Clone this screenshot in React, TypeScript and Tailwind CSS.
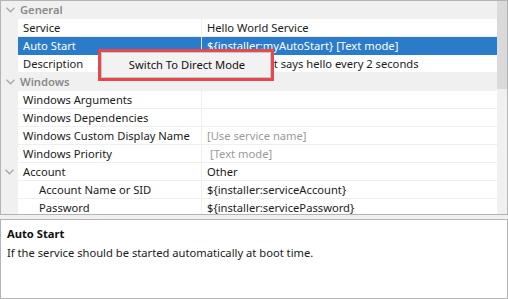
import type { ReactNode } from "react";

type Fila = {
  rotulo: string;
  valor?: string;
  nivel?: number;
  cinza?: boolean;
  recuoValor?: boolean;
  selecionada?: boolean;
  expansivel?: boolean;
};

const geral: Fila[] = [
  { rotulo: "Service", valor: "Hello World Service" },
  { rotulo: "Auto Start", valor: "${installer:myAutoStart} [Text mode]", selecionada: true },
  { rotulo: "Description", valor: "A service that says hello every 2 seconds" },
];

const windows: Fila[] = [
  { rotulo: "Windows Arguments" },
  { rotulo: "Windows Dependencies" },
  { rotulo: "Windows Custom Display Name", valor: "[Use service name]", cinza: true },
  { rotulo: "Windows Priority", valor: "[Text mode]", cinza: true, recuoValor: true },
  { rotulo: "Account", valor: "Other", expansivel: true },
  { rotulo: "Account Name or SID", valor: "${installer:serviceAccount}", nivel: 1 },
  { rotulo: "Password", valor: "${installer:servicePassword}", nivel: 1 },
];

function Chevron() {
  return (
    <svg width="9" height="6" viewBox="0 0 9 6" className="shrink-0">
      <polyline points="0.5,0.8 4.5,4.8 8.5,0.8" fill="none" stroke="#a8a8a8" strokeWidth="1.3" />
    </svg>
  );
}

function Grupo({ titulo }: { titulo: string }) {
  return (
    <div className="flex h-[18px] items-center bg-[#f0f0f0] pl-[5px]">
      <Chevron />
      <span className="ml-[5px] font-semibold text-[#8a8a8a]">{titulo}</span>
    </div>
  );
}

function Linha({ fila }: { fila: Fila }) {
  const sel = fila.selecionada;
  return (
    <div className="flex h-[18px]">
      <div className="flex w-[17px] shrink-0 items-center justify-center bg-[#f0f0f0]">
        {fila.expansivel ? <Chevron /> : null}
      </div>
      <div
        className={`flex min-w-0 flex-1 border-b ${
          sel ? "border-[#2a7bc9] bg-[#2a7bc9] text-white" : "border-[#efefef] bg-white text-[#1a1a1a]"
        }`}
      >
        <div
          className={`flex w-[184px] shrink-0 items-center whitespace-nowrap border-r ${
            sel ? "border-[#dfe8f2]" : "border-[#efefef]"
          } ${fila.nivel ? "pl-[21px]" : "pl-[5px]"}`}
        >
          {fila.rotulo}
        </div>
        <div
          className={`flex flex-1 items-center whitespace-nowrap ${fila.recuoValor ? "pl-[8px]" : "pl-[5px]"} ${
            fila.cinza ? "text-[#9a9a9a]" : ""
          }`}
        >
          {fila.valor}
        </div>
      </div>
    </div>
  );
}

function Painel({ children, className }: { children: ReactNode; className: string }) {
  return <div className={`border border-[#b4b4b4] ${className}`}>{children}</div>;
}

export default function App() {
  return (
    <div
      className="flex h-[299px] w-[508px] flex-col gap-[4px] bg-[#f0f0f0] text-[11.2px] leading-none"
      style={{ fontFamily: '"Noto Sans", "Open Sans", sans-serif' }}
    >
      <Painel className="relative flex h-[215px] shrink-0 overflow-hidden bg-white">
        <div className="min-w-0 flex-1">
          <Grupo titulo="General" />
          {geral.map((f) => (
            <Linha key={f.rotulo} fila={f} />
          ))}
          <Grupo titulo="Windows" />
          {windows.map((f) => (
            <Linha key={f.rotulo} fila={f} />
          ))}
        </div>
        <div className="flex w-[10px] shrink-0 flex-col bg-[#f0f0f0]">
          <div className="h-[88px] bg-[#dadada]" />
        </div>

        <div className="absolute left-[97px] top-[48px] flex h-[32px] w-[176px] border-[3px] border-[#e5484d] bg-white">
          <div className="flex flex-1 items-center justify-center border border-[#c8c8c8] bg-[#f2f2f2] pl-[2px] text-[#111]">
            Switch To Direct Mode
          </div>
        </div>
      </Painel>

      <Painel className="flex-1 bg-white px-[6px] pt-[8px]">
        <p className="font-bold text-[#111]">Auto Start</p>
        <p className="mt-[8px] text-[#1a1a1a]">If the service should be started automatically at boot time.</p>
      </Painel>
    </div>
  );
}
